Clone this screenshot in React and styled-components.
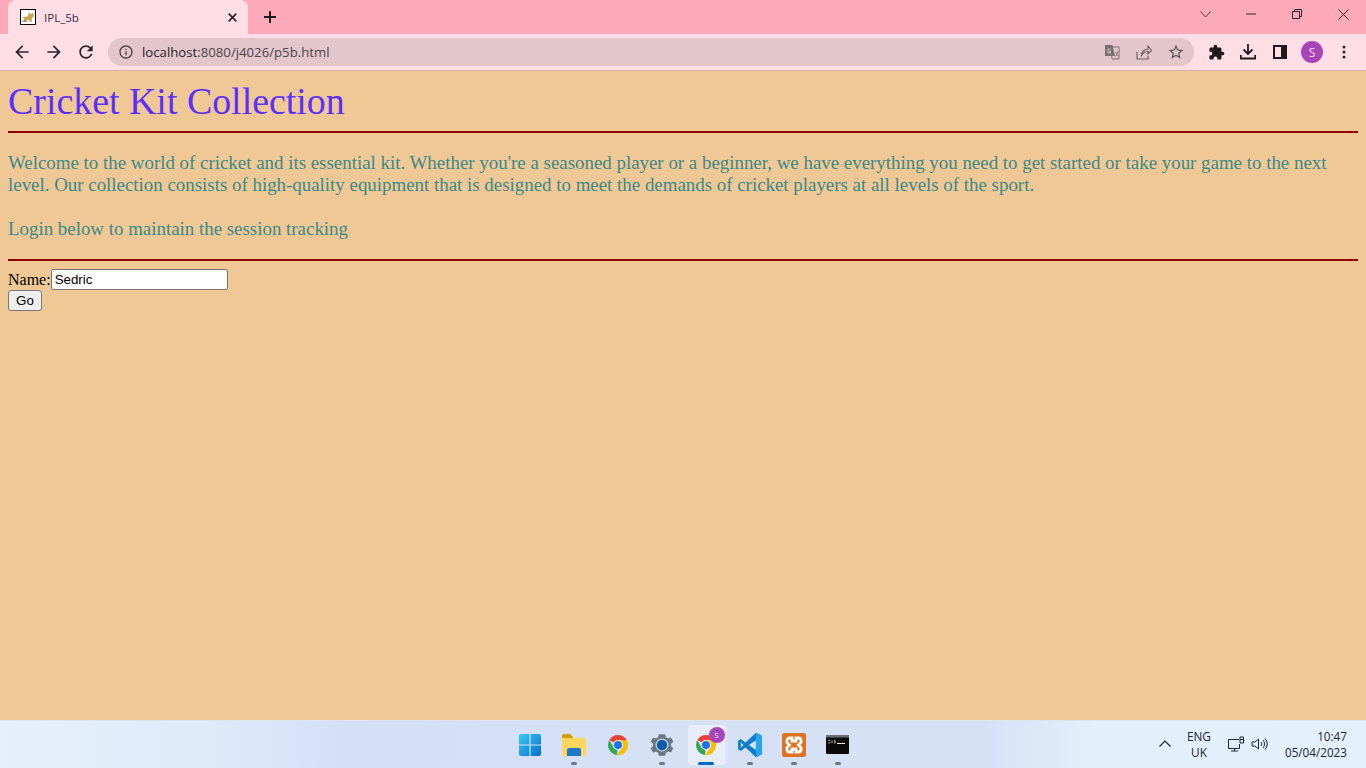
import React from "react";
import styled, { createGlobalStyle } from "styled-components";

const Global = createGlobalStyle`
  html, body { margin: 0; height: 100%; overflow: hidden; }
  #root { height: 100vh; }
`;

const Screen = styled.div`
  height: 768px; display: flex; flex-direction: column;
`;
const Chrome = styled.header`
  background: #ffdfe5; height: 71px; flex: none; display: flex; flex-direction: column;
  font-family: "Open Sans", "Noto Sans", sans-serif;
`;
const TabStrip = styled.div`
  height: 34px; background: #ffaaba; display: flex; align-items: stretch; padding-left: 8px;
`;
const Tab = styled.div`
  width: 240px; background: #ffdfe5; border-radius: 8px 8px 0 0; display: flex; align-items: center;
  padding: 0 11px 0 12px; box-sizing: border-box; gap: 8px;
`;
const TabTitle = styled.span`flex: 1; color: #43284a; font-size: 11.5px;`;
const NewTab = styled.div`
  width: 44px; display: flex; align-items: center; justify-content: center;
`;
const Spacer = styled.div`flex: 1;`;
const WinBtn = styled.div`
  width: 46px; display: flex; align-items: center; justify-content: center; padding-bottom: 6px;
`;
const Toolbar = styled.div`
  height: 36px; display: flex; align-items: center; padding: 0 6px; border-bottom: 1px solid #d9b5ae;
`;
const ToolBtn = styled.div`
  width: 32px; height: 28px; flex: none; display: flex; align-items: center; justify-content: center;
  margin-left: ${p => p.$gap || 0}px;
`;
const Omnibox = styled.div`
  flex: 1; height: 28px; margin: 0 4px 0 6px; background: #e2c6cc; border-radius: 14px; display: flex; align-items: center;
  padding: 0 2px;
`;
const Url = styled.span`
  flex: 1; font-size: 13.2px; color: #4f4348;
`;
const Host = styled.span`color: #2a2226;`;
const Avatar = styled.div`
  width: 22px; height: 22px; border-radius: 50%; background: #a846b8; color: #f4dff6; font-size: 12px;
  display: flex; align-items: center; justify-content: center;
`;
const Page = styled.main`
  flex: 1; background: #f0c896; padding: 8px; font-family: "Liberation Serif", serif; font-size: 16px; color: #000; overflow: hidden;
`;
const Title = styled.h1`
  margin: 0; font-size: 37.9px; line-height: 44px; font-weight: 400; color: #5a30ff;
`;
const Rule = styled.hr`
  border: none; height: 2px; background: #8b0000; margin: ${p => p.$top}px 0 ${p => p.$bottom}px;
`;
const Intro = styled.p`
  margin: 0 0 22px; font-size: 18.9px; line-height: 22px; color: #3a8a88;
`;
const Form = styled.form`margin: 0; line-height: 18px;`;
const NameRow = styled.div`display: flex; align-items: center; height: 21px;`;
const NameInput = styled.input`
  width: 177px; height: 21px; box-sizing: border-box; border: 1px solid #767676; border-radius: 2px; padding: 1px 3px;
  font: 13.33px "Liberation Sans", Arial, sans-serif; background: #fff; color: #000; margin: 0; outline: none;
`;
const Go = styled.button`
  display: block; width: 34px; height: 21px; padding: 0; box-sizing: border-box; border: 1px solid #767676; border-radius: 3px; background: #efefef;
  font: 13.33px "Liberation Sans", Arial, sans-serif; color: #000; margin: 0;
`;
const Taskbar = styled.footer`
  height: 48px; flex: none; display: grid; grid-template-columns: 1fr auto 1fr; align-items: center; box-sizing: border-box;
  background: linear-gradient(90deg, #e5f0fa 0%, #dfeafa 15%, #d4e0f8 25%, #d6e1f5 50%, #d6e1f6 72%, #e3effa 80%, #e4f0fa 100%);
  border-top: 1px solid #dde6f0; font-family: "Open Sans", sans-serif; color: #1c2733;
`;
const Dock = styled.div`
  grid-column: 2; display: flex; margin-left: 1px;
`;
const Slot = styled.div`
  width: 44px; height: 40px; position: relative; display: flex; align-items: center; justify-content: center; box-sizing: border-box;
  border-radius: 4px;
  ${p => p.$active ? "background: #e8eef9; box-shadow: 1px 0 0 #eef2fb, 2px 0 0 #d6e1f6, 3px 0 0 #e4eaf8; width: 36px; margin: 0 4px;" : ""}
`;
const Pip = styled.span`
  position: absolute; bottom: 0; left: 50%; transform: translateX(-50%); height: 3px; border-radius: 2px;
  width: ${p => p.$on ? 16 : 6}px; background: ${p => p.$on ? "#0067c0" : "#6f7680"};
`;
const Badge = styled.span`
  position: absolute; top: 2px; right: -1px; width: 16px; height: 16px; border-radius: 50%; background: #a846b8; color: #f4dff6;
  font-size: 8px; display: flex; align-items: center; justify-content: center;
`;
const Tray = styled.div`
  grid-column: 3; justify-self: end; display: flex; align-items: center; padding: 0 19px 2px 0;
`;
const TrayBtn = styled.div`display: flex; align-items: center; justify-content: center; width: ${p => p.$w}px;`;
const Lang = styled.div`text-align: center; line-height: 16px; width: 36px; margin: 0 8px 0 4px; font-size: 11.8px;`;
const Clock = styled.div`text-align: right; line-height: 16px; margin-left: 12px; font-size: 11.7px;`;

const M = ({ d, size = 20, fill = "#2b2529" }) => (
  <svg width={size} height={size} viewBox="0 0 24 24" fill={fill}><path d={d} /></svg>
);

const Favicon = () => (
  <svg width="16" height="16" viewBox="0 0 16 16">
    <rect x=".5" y=".5" width="15" height="15" fill="#fff" stroke="#000" />
    <path d="M3 8.500c1.500-.5 3-.5 4.500-.5l1-1.500 .5-2.500 1.500 1.200h1.500l1-1.200 .3 3-1.300 2-1 1.500 1 2-1.800-.2-1.200-1.800-3 .8 1 1.200-2.500 0-1-1.300 1.500-1.500z" fill="#d2a54a" stroke="#8c7a46" strokeWidth=".4" />
    <path d="M2 12.500c1-.5 2.500-.5 4 0" stroke="#6b5a2a" fill="none" strokeWidth=".7" />
  </svg>
);

const ChromeIcon = ({ size = 24 }) => (
  <svg width={size} height={size} viewBox="0 0 48 48">
    <path d="M24 24L6.700 14A20 20 0 0 1 41.300 14H24z" fill="#ea4335" />
    <path d="M24 24l-8.700 5L6.700 14A20 20 0 0 0 22 43.900z" fill="#34a853" />
    <path d="M24 14h17.300A20 20 0 0 1 22 43.900l10.700-15z" fill="#fbbc04" />
    <circle cx="24" cy="24" r="10" fill="#fff" />
    <circle cx="24" cy="24" r="8" fill="#1a73e8" />
  </svg>
);

const WinLogo = () => (
  <svg width="24" height="24" viewBox="0 0 24 24">
    <defs>
      <linearGradient id="w" x1="0" y1="0" x2="1" y2="1"><stop offset="0" stopColor="#3cc8f8" /><stop offset="1" stopColor="#0670cc" /></linearGradient>
    </defs>
    <path d="M1 3a2 2 0 0 1 2-2h8.400v10.400H1zM12.600 1H21a2 2 0 0 1 2 2v8.400H12.600zM1 12.600h10.400V23H3a2 2 0 0 1-2-2zM12.600 12.600H23V21a2 2 0 0 1-2 2h-8.400z" fill="url(#w)" />
  </svg>
);
const Folder = () => (
  <svg width="24" height="22" viewBox="0 0 24 22">
    <path d="M0 2a2 2 0 0 1 2-2h6l3 3v4H0z" fill="#d69b00" />
    <path d="M0 4h22a2 2 0 0 1 2 2v14a2 2 0 0 1-2 2H2a2 2 0 0 1-2-2z" fill="#ffd75e" />
    <path d="M5 16a2 2 0 0 1 2-2h10a2 2 0 0 1 2 2v6H5z" fill="#1c78c6" />
  </svg>
);
const Gear = () => (
  <svg width="26" height="26" viewBox="0 0 24 24">
    <path d="M20.300 13.200a8.500 8.500 0 0 0 0-2.400l2.200-1.800-2.300-4-2.700 1a8.500 8.500 0 0 0-2-1.200L15 2h-6l-.5 2.800a8.500 8.500 0 0 0-2 1.200l-2.700-1-2.300 4 2.200 1.800a8.500 8.500 0 0 0 0 2.400L1.500 15l2.300 4 2.700-1a8.500 8.500 0 0 0 2 1.200L9 22h6l.5-2.800a8.500 8.500 0 0 0 2-1.200l2.700 1 2.300-4z" fill="#6a7680" />
    <circle cx="12" cy="12" r="6" fill="#c9d4e6" />
    <circle cx="12" cy="12" r="4.800" fill="#0b5cad" />
  </svg>
);
const VSCode = () => (
  <svg width="26" height="26" viewBox="0 0 24 24">
    <path d="M17.500 .8L23 3.500v17l-5.500 2.700L7.800 14.200l-4.300 3.300L1 16V8l2.500-1.500 4.300 3.300z" fill="#0f7fcb" />
    <path d="M17.500 .8L23 3.500v17l-5.500 2.700z" fill="#24a5ee" />
    <path d="M17.500 7.500L11 12l6.500 4.500z" fill="#d6e1f6" />
    <path d="M3.500 9.500L6 12l-2.500 2.500z" fill="#d6e1f6" />
  </svg>
);
const Xampp = () => (
  <svg width="24" height="24" viewBox="0 0 24 24">
    <rect width="24" height="24" rx="2.500" fill="#e2711d" />
    <path d="M7.500 5h2.500v3h4V5h2.500a2.500 2.500 0 0 1 2.500 2.500v2L16.500 12l2.500 2.500v2a2.500 2.500 0 0 1-2.500 2.500H14v-3h-4v3H7.500A2.500 2.500 0 0 1 5 16.500v-2L7.500 12 5 9.500v-2A2.500 2.500 0 0 1 7.500 5z" fill="none" stroke="#fff" strokeWidth="2.800" />
  </svg>
);
const Term = () => (
  <svg width="23" height="19" viewBox="0 0 23 19">
    <rect width="23" height="19" rx="1" fill="#0a0a0a" />
    <rect width="23" height="2.500" fill="#6a7076" />
    <path d="M2.500 5.500h1.500M2.500 8h1.500M6 5.500v2.500M8 5.500h1V8H8" stroke="#ddd" strokeWidth=".9" fill="none" />
    <path d="M11 8.500h8" stroke="#eee" strokeWidth="1" />
  </svg>
);

const P = {
  back: "M20 11H7.830l5.590-5.590L12 4l-8 8 8 8 1.410-1.410L7.830 13H20v-2z",
  fwd: "M12 4l-1.410 1.410L16.170 11H4v2h12.170l-5.580 5.590L12 20l8-8z",
  reload: "M17.650 6.350C16.200 4.900 14.210 4 12 4c-4.420 0-7.990 3.580-7.990 8s3.570 8 7.990 8c3.730 0 6.840-2.550 7.730-6h-2.080c-.82 2.330-3.040 4-5.650 4-3.310 0-6-2.690-6-6s2.690-6 6-6c1.660 0 3.140.69 4.220 1.780L13 11h7V4l-2.350 2.350z",
  info: "M11 7h2v2h-2zm0 4h2v6h-2zm1-9C6.480 2 2 6.480 2 12s4.480 10 10 10 10-4.480 10-10S17.520 2 12 2zm0 18c-4.410 0-8-3.590-8-8s3.590-8 8-8 8 3.590 8 8-3.590 8-8 8z",
  puzzle: "M20.500 11H19V7c0-1.100-.9-2-2-2h-4V3.500C13 2.120 11.880 1 10.500 1S8 2.120 8 3.500V5H4c-1.100 0-1.990.9-1.990 2v3.800H3.500c1.490 0 2.700 1.210 2.700 2.700s-1.210 2.700-2.700 2.700H2V20c0 1.100.9 2 2 2h3.800v-1.500c0-1.490 1.210-2.700 2.700-2.700 1.490 0 2.700 1.210 2.700 2.700V22H17c1.100 0 2-.9 2-2v-4h1.500c1.380 0 2.500-1.120 2.500-2.500S21.880 11 20.500 11z",
  star: "M22 9.240l-7.190-.62L12 2 9.190 8.630 2 9.240l5.460 4.730L5.820 21 12 17.270 18.180 21l-1.630-7.030L22 9.240zM12 15.400l-3.760 2.270 1-4.280-3.320-2.880 4.380-.38L12 6.100l1.710 4.040 4.380.38-3.320 2.880 1 4.280L12 15.400z",
};

const Line = ({ w, h, children, color = "#3a2a30", sw = 1 }) => (
  <svg width={w} height={h} viewBox={`0 0 ${w} ${h}`} fill="none" stroke={color} strokeWidth={sw}>{children}</svg>
);

const slots = [
  { key: "win", icon: <WinLogo /> },
  { key: "files", icon: <Folder />, pip: true },
  { key: "chrome", icon: <ChromeIcon /> },
  { key: "gear", icon: <Gear />, pip: true },
  { key: "chrome2", icon: <ChromeIcon />, active: true },
  { key: "vs", icon: <VSCode />, pip: true },
  { key: "x", icon: <Xampp />, pip: true },
  { key: "t", icon: <Term />, pip: true },
];

export default function App() {
  return (
    <Screen>
      <Global />
      <Chrome>
        <TabStrip>
          <Tab>
            <Favicon />
            <TabTitle>IPL_5b</TabTitle>
            <Line w={9} h={9} color="#2b2529" sw={1.700}><path d="M.7 .7l7.600 7.600M8.300 .7L.7 8.300" /></Line>
          </Tab>
          <NewTab><Line w={12} h={12} color="#1f1a1d" sw={2}><path d="M6 0v12M0 6h12" /></Line></NewTab>
          <Spacer />
          <WinBtn><Line w={11} h={7} color="#4a3a40"><path d="M.5 .5L5.500 6l5-5.500" /></Line></WinBtn>
          <WinBtn><Line w={10} h={2} color="#2b2529"><path d="M0 1h10" /></Line></WinBtn>
          <WinBtn><Line w={10} h={10} color="#2b2529"><path d="M.5 2.500h7v7h-7zM2.500 2.500V.5h7v7h-2" /></Line></WinBtn>
          <WinBtn><Line w={11} h={11} color="#2b2529"><path d="M.5 .5l10 10M10.500 .5l-10 10" /></Line></WinBtn>
        </TabStrip>
        <Toolbar>
          <ToolBtn><M d={P.back} /></ToolBtn>
          <ToolBtn><M d={P.fwd} /></ToolBtn>
          <ToolBtn><M d={P.reload} /></ToolBtn>
          <Omnibox>
            <ToolBtn><M d={P.info} size={16} fill="#4d4347" /></ToolBtn>
            <Url><Host>localhost</Host>:8080/j4026/p5b.html</Url>
            <ToolBtn>
              <svg width="16" height="16" viewBox="0 0 16 16">
                <path d="M7 3h8v12H8z" fill="none" stroke="#7d7075" />
                <path d="M1 1h7.500L11 12H1z" fill="#7d7075" />
                <path d="M6.500 5H4v4h2.500V7.200H5" fill="none" stroke="#e2c6cc" strokeWidth=".9" />
                <path d="M11.500 7.500l2.500 5M14 7.500l-2.500 5" stroke="#7d7075" strokeWidth=".8" />
              </svg>
            </ToolBtn>
            <ToolBtn>
              <Line w={16} h={15} color="#6e6166" sw={1.200}><path d="M1 7v7h11v-3M5.500 10.500c0-4 3-6.500 6.500-6.500V1l3.500 4.500L12 9V6.500c-3 0-5 1.500-6.500 4z" /></Line>
            </ToolBtn>
            <ToolBtn><M d={P.star} size={18} fill="#5f5459" /></ToolBtn>
          </Omnibox>
          <ToolBtn $gap={2}><M d={P.puzzle} size={17} fill="#1f1a1d" /></ToolBtn>
          <ToolBtn>
            <svg width="16" height="16" viewBox="0 0 16 16"><path d="M8 0v9M3.500 5.500L8 10l4.500-4.500M.8 11v3.500h14.400V11" fill="none" stroke="#1f1a1d" strokeWidth="1.800" /></svg>
          </ToolBtn>
          <ToolBtn>
            <svg width="14" height="14" viewBox="0 0 14 14"><rect x="1" y="1" width="12" height="12" fill="#ffdfe5" stroke="#1f1a1d" strokeWidth="2" /><rect x="8" y="1" width="5" height="12" fill="#1f1a1d" /></svg>
          </ToolBtn>
          <ToolBtn><Avatar>S</Avatar></ToolBtn>
          <ToolBtn>
            <svg width="4" height="14" viewBox="0 0 4 14" fill="#2b2529"><circle cx="2" cy="2" r="1.500" /><circle cx="2" cy="7" r="1.500" /><circle cx="2" cy="12" r="1.500" /></svg>
          </ToolBtn>
        </Toolbar>
      </Chrome>
      <Page>
        <Title>Cricket Kit Collection</Title>
        <Rule $top={8} $bottom={19} />
        <Intro>
          Welcome to the world of cricket and its essential kit. Whether you're a seasoned player or a beginner, we have everything you need to get started or take your game to the next level. Our collection consists of high-quality equipment that is designed to meet the demands of cricket players at all levels of the sport.
        </Intro>
        <Intro>Login below to maintain the session tracking</Intro>
        <Rule $top={-3} $bottom={8} />
        <Form onSubmit={e => e.preventDefault()}>
          <NameRow>
            <label htmlFor="name">Name:</label>
            <NameInput id="name" defaultValue="Sedric" />
          </NameRow>
          <Go type="submit">Go</Go>
        </Form>
      </Page>
      <Taskbar>
        <Dock>
          {slots.map(s => (
            <Slot key={s.key} $active={s.active}>
              {s.icon}
              {s.pip && <Pip />}
              {s.active && <Pip $on />}
              {s.active && <Badge>S</Badge>}
            </Slot>
          ))}
        </Dock>
        <Tray>
          <TrayBtn $w={24}><Line w={12} h={7} color="#1c2733" sw={1.200}><path d="M.5 6.500L6 1l5.500 5.500" /></Line></TrayBtn>
          <Lang>ENG<br />UK</Lang>
          <TrayBtn $w={22}>
            <Line w={18} h={16} color="#1c2733"><path d="M12 3.500H1.500v9h11V8M4 15h7M7.500 12.500V15M13 1h3.500v6H13z M13 3.500h3.500" /></Line>
          </TrayBtn>
          <TrayBtn $w={26}>
            <Line w={18} h={14} color="#1c2733"><path d="M1 5v4h3l3.500 3V2L4 5zM10 5a3 3 0 0 1 0 4M12 3a6 6 0 0 1 0 8M14 1.500a8 8 0 0 1 0 11" /></Line>
          </TrayBtn>
          <Clock>10:47<br />05/04/2023</Clock>
        </Tray>
      </Taskbar>
    </Screen>
  );
}
